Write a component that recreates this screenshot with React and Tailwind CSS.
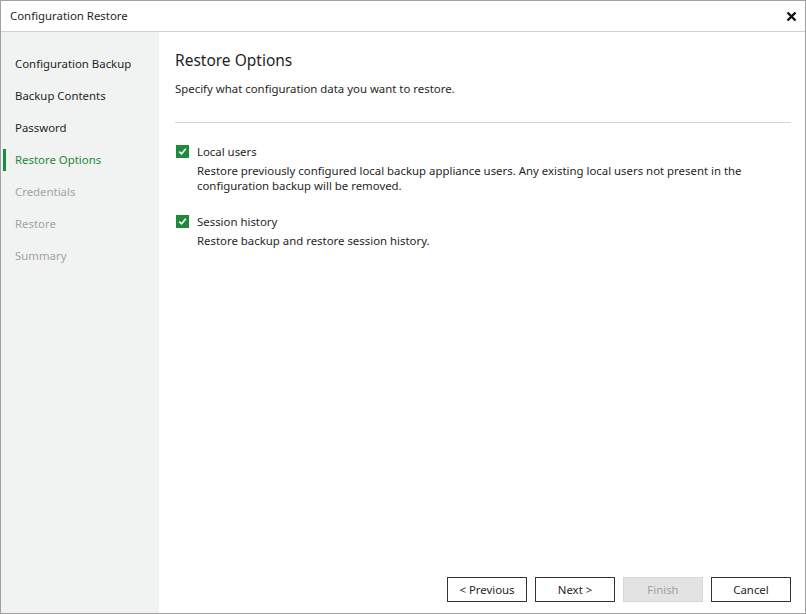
import React from "react";

const Check = () => (
  <span className="w-[13px] h-[13px] bg-[#1e8a3c] flex items-center justify-center shrink-0">
    <svg width="9" height="9" viewBox="0 0 9 9"><path d="M1.2 4.6 L3.5 6.8 L7.8 1.8" stroke="white" strokeWidth="1.6" fill="none"/></svg>
  </span>
);

export default function App() {
  const items = [
    ["Configuration Backup", "done"],
    ["Backup Contents", "done"],
    ["Password", "done"],
    ["Restore Options", "active"],
    ["Credentials", "off"],
    ["Restore", "off"],
    ["Summary", "off"],
  ];
  return (
    <div className="w-[806px] h-[614px] border border-[#a0a0a0] bg-white flex flex-col text-[11.4px] text-[#1f1f1f]" style={{ fontFamily: '"Segoe UI","Noto Sans",sans-serif' }}>
      <div className="h-[31px] shrink-0 border-b border-[#d0d0d0] flex items-center justify-between pl-[9px] pr-[8px]">
        <span>Configuration Restore</span>
        <svg width="11" height="11" viewBox="0 0 11 11"><path d="M1.5 1.5 L9.5 9.5 M9.5 1.5 L1.5 9.5" stroke="#111" strokeWidth="2.4"/></svg>
      </div>
      <div className="flex flex-1 min-h-0">
        <div className="w-[158px] shrink-0 bg-[#f1f2f2] pt-[16px] flex flex-col">
          {items.map(([t, s]) => (
            <div key={t} className="h-[32px] flex items-center relative pl-[14px]">
              {s === "active" && <span className="absolute left-[2px] top-[5px] w-[3px] h-[22px] bg-[#1e8a3c]" />}
              <span className={s === "active" ? "text-[#1e8a3c]" : s === "off" ? "text-[#a3a3a3]" : "text-[#1f1f1f]"}>{t}</span>
            </div>
          ))}
        </div>
        <div className="flex-1 flex flex-col pl-[16px] pr-[14px] pt-[17px] pb-[11px]">
          <div className="text-[15.5px] leading-[22px]">Restore Options</div>
          <div className="mt-[10px] leading-[16px]">Specify what configuration data you want to restore.</div>
          <div className="mt-[25px] border-t border-[#d6d6d6]" />
          <div className="mt-[20px] flex items-center gap-[8px] pl-[1px]"><Check /><span>Local users</span></div>
          <div className="ml-[22px] mt-[3px] leading-[15px]">Restore previously configured local backup appliance users. Any existing local users not present in the<br/>configuration backup will be removed.</div>
          <div className="mt-[20px] flex items-center gap-[8px] pl-[1px]"><Check /><span>Session history</span></div>
          <div className="ml-[22px] mt-[3px] leading-[15px]">Restore backup and restore session history.</div>
          <div className="flex-1" />
          <div className="flex justify-end gap-[8px]">
            {["< Previous", "Next >", "Finish", "Cancel"].map((b) => (
              <div key={b} className={"w-[80px] h-[25px] flex items-center justify-center border " + (b === "Finish" ? "bg-[#e3e3e3] border-[#d6d6d6] text-[#a0a0a0]" : "border-[#333] bg-white")}>{b}</div>
            ))}
          </div>
        </div>
      </div>
    </div>
  );
}
